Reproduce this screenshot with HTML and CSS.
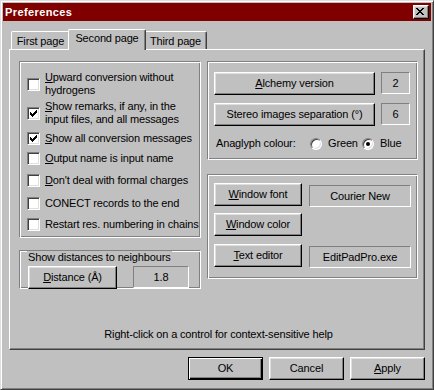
FILE: index.html
```html
<!DOCTYPE html>
<html>
<head>
<meta charset="utf-8">
<title>Preferences</title>
<link rel="stylesheet" href="styles.css">
</head>
<body>
<div class="window">
  <div class="titlebar">
    <span class="title">Preferences</span>
    <div class="closebtn">
      <svg width="8" height="7" viewBox="0 0 8 7" shape-rendering="crispEdges">
        <g fill="#000">
          <rect x="0" y="0" width="2" height="1"/><rect x="6" y="0" width="2" height="1"/>
          <rect x="1" y="1" width="2" height="1"/><rect x="5" y="1" width="2" height="1"/>
          <rect x="2" y="2" width="4" height="1"/>
          <rect x="3" y="3" width="2" height="1"/>
          <rect x="2" y="4" width="4" height="1"/>
          <rect x="1" y="5" width="2" height="1"/><rect x="5" y="5" width="2" height="1"/>
          <rect x="0" y="6" width="2" height="1"/><rect x="6" y="6" width="2" height="1"/>
        </g>
      </svg>
    </div>
  </div>
  <div class="content">
    <div class="tabs">
      <div class="tab tab-first">First page</div>
      <div class="tab tab-selected">Second page</div>
      <div class="tab tab-third">Third page</div>
    </div>
    <div class="panel">
      <div class="columns">
        <div class="leftcol">
          <div class="group group-checks">
            <div class="check c1"><span class="box"></span><span class="label"><u>U</u>pward conversion without<br>hydrogens</span></div>
            <div class="check c2"><span class="box checked"><svg width="7" height="7" viewBox="0 0 7 7" shape-rendering="crispEdges"><g fill="#000"><rect x="6" y="0" width="1" height="1"/><rect x="5" y="1" width="2" height="1"/><rect x="0" y="2" width="1" height="1"/><rect x="4" y="2" width="3" height="1"/><rect x="0" y="3" width="2" height="1"/><rect x="3" y="3" width="3" height="1"/><rect x="0" y="4" width="5" height="1"/><rect x="1" y="5" width="3" height="1"/><rect x="2" y="6" width="1" height="1"/></g></svg></span><span class="label"><u>S</u>how remarks, if any, in the<br>input files, and all messages</span></div>
            <div class="check c3"><span class="box checked"><svg width="7" height="7" viewBox="0 0 7 7" shape-rendering="crispEdges"><g fill="#000"><rect x="6" y="0" width="1" height="1"/><rect x="5" y="1" width="2" height="1"/><rect x="0" y="2" width="1" height="1"/><rect x="4" y="2" width="3" height="1"/><rect x="0" y="3" width="2" height="1"/><rect x="3" y="3" width="3" height="1"/><rect x="0" y="4" width="5" height="1"/><rect x="1" y="5" width="3" height="1"/><rect x="2" y="6" width="1" height="1"/></g></svg></span><span class="label"><u>S</u>how all conversion messages</span></div>
            <div class="check c4"><span class="box"></span><span class="label"><u>O</u>utput name is input name</span></div>
            <div class="check c5"><span class="box"></span><span class="label"><u>D</u>on't deal with formal charges</span></div>
            <div class="check c6"><span class="box"></span><span class="label">CONECT records to the end</span></div>
            <div class="check c7"><span class="box"></span><span class="label">Restart res. numbering in chains</span></div>
          </div>
          <div class="group group-dist">
            <div class="legend">Show distances to neighbours</div>
            <div class="dist-row">
              <div class="btn btn-dist"><span><u>D</u>istance (Å)</span></div>
              <div class="field field-dist">1.8</div>
            </div>
          </div>
        </div>
        <div class="rightcol">
          <div class="group group-alch">
            <div class="alch-row">
              <div class="btn btn-alch"><span><u>A</u>lchemy version</span></div>
              <div class="field field-num">2</div>
            </div>
            <div class="alch-row row-stereo">
              <div class="btn btn-alch"><span>Stereo images separation (°)</span></div>
              <div class="field field-num">6</div>
            </div>
            <div class="anaglyph">
              <span class="ana-label">Anaglyph colour:</span>
              <span class="radio"></span><span class="radio-label">Green</span>
              <span class="radio on"></span><span class="radio-label">Blue</span>
            </div>
          </div>
          <div class="group group-win">
            <div class="btn btn-win"><span><u>W</u>indow font</span></div>
            <div class="field field-win">Courier New</div>
            <div class="btn btn-win row2"><span><u>W</u>indow color</span></div>
            <div class="btn btn-win row3"><span><u>T</u>ext editor</span></div>
            <div class="field field-win row3">EditPadPro.exe</div>
          </div>
        </div>
      </div>
      <div class="hint">Right-click on a control for context-sensitive help</div>
    </div>
    <div class="buttons">
      <div class="btn btn-dlg btn-default"><span>OK</span></div>
      <div class="btn btn-dlg"><span>Cancel</span></div>
      <div class="btn btn-dlg"><span><u>A</u>pply</span></div>
    </div>
  </div>
</div>
</body>
</html>
```

FILE: styles.css
```css
html, body {
  margin: 0;
  padding: 0;
  background: #c0c0c0;
}
body {
  width: 434px;
  height: 390px;
  overflow: hidden;
  font-family: "Liberation Sans", Arial, sans-serif;
  font-size: 11px;
  line-height: 13px;
  letter-spacing: -0.15px;
  color: #000;
}
u { text-decoration: underline; text-underline-offset: 1px; }

.window {
  box-sizing: border-box;
  width: 434px;
  height: 390px;
  border: 1px solid;
  border-color: #dfdfdf #404040 #404040 #dfdfdf;
  box-shadow: inset 1px 1px #fff, inset -1px -1px #808080;
  padding: 2px;
  display: flex;
  flex-direction: column;
  background: #c0c0c0;
}

.titlebar {
  height: 18px;
  background: #800000;
  display: flex;
  align-items: center;
  padding: 0 2px;
}
.title {
  flex: 1;
  color: #fff;
  font-weight: bold;
  letter-spacing: 0.4px;
}
.closebtn {
  box-sizing: border-box;
  width: 16px;
  height: 14px;
  background: #c0c0c0;
  border: 1px solid;
  border-color: #fff #000 #000 #fff;
  box-shadow: inset -1px -1px #808080, inset 1px 1px #dfdfdf;
  padding: 2px 0 0 2px;
  display: flex;
  align-items: flex-start;
}
.closebtn svg { display: block; }

.content {
  flex: 1;
  display: flex;
  flex-direction: column;
  padding: 8px 6px 7px 6px;
}

.tabs {
  height: 20px;
  display: flex;
  align-items: flex-end;
  padding-left: 2px;
}
.tab {
  box-sizing: border-box;
  height: 18px;
  padding-top: 3px;
  text-align: center;
  background: #c0c0c0;
  border-top: 1px solid #fff;
  border-left: 1px solid #fff;
  border-right: 1px solid #404040;
  box-shadow: inset -1px 0 #808080;
  border-radius: 2px 2px 0 0;
}
.tab-first { width: 59px; }
.tab-third { width: 63px; }
.tab-selected {
  position: relative;
  z-index: 1;
  width: 78px;
  height: 21px;
  padding-top: 2px;
  margin: 0 -2px -1px -2px;
}

.panel {
  flex: 1;
  box-sizing: border-box;
  border: 1px solid;
  border-color: #fff #404040 #404040 #fff;
  box-shadow: inset -1px -1px #808080;
  padding: 11px 6px 8px 9px;
  display: flex;
  flex-direction: column;
}

.columns {
  display: flex;
  gap: 6px;
  align-items: flex-start;
}
.leftcol {
  width: 182px;
  display: flex;
  flex-direction: column;
}
.rightcol {
  width: 211px;
  display: flex;
  flex-direction: column;
}

.group {
  box-sizing: border-box;
  border: 1px solid;
  border-color: #808080 #fff #fff #808080;
  box-shadow: inset 1px 1px #fff, inset -1px -1px #808080;
}

/* checks group */
.group-checks {
  height: 177px;
  padding: 9px 0 0 7px;
  display: flex;
  flex-direction: column;
}
.check {
  display: flex;
  align-items: center;
  white-space: nowrap;
}
.c2 { margin-top: 3px; }
.c3 { margin-top: 6px; }
.c4 { margin-top: 7px; }
.c5 { margin-top: 9px; }
.c6 { margin-top: 10px; }
.c7 { margin-top: 8px; }
.box {
  box-sizing: border-box;
  flex: none;
  width: 13px;
  height: 13px;
  background: #fff;
  border: 1px solid;
  border-color: #808080 #fff #fff #808080;
  box-shadow: inset 1px 1px #404040, inset -1px -1px #dfdfdf;
  padding: 2px 0 0 2px;
  margin-right: 5px;
}
.box svg { display: block; }

/* distance group */
.group-dist {
  margin-top: 12px;
  height: 39px;
  padding: 0 0 0 8px;
}
.legend {
  display: inline-block;
  margin: -7px 0 0 -1px;
  padding: 0 1px;
  background: #c0c0c0;
  position: relative;
}
.dist-row {
  display: flex;
  margin-top: 2px;
  align-items: flex-start;
}

/* buttons */
.btn {
  box-sizing: border-box;
  height: 23px;
  background: #c0c0c0;
  border: 1px solid;
  border-color: #fff #000 #000 #fff;
  box-shadow: inset -1px -1px #808080, inset 1px 1px #dfdfdf;
  display: flex;
  align-items: center;
  justify-content: center;
  white-space: nowrap;
  padding-bottom: 1px;
}
.btn-dist { width: 89px; }
.field {
  box-sizing: border-box;
  height: 22px;
  border: 1px solid;
  border-color: #808080 #fff #fff #808080;
  display: flex;
  align-items: center;
  justify-content: center;
  white-space: nowrap;
}
.field-dist { width: 56px; margin-left: 16px; }

/* alchemy group */
.group-alch {
  height: 99px;
  padding: 10px 0 0 6px;
}
.alch-row {
  display: flex;
  align-items: flex-start;
}
.row-stereo { margin-top: 8px; }
.btn-alch { width: 161px; }
.field-num { width: 29px; margin-left: 6px; }
.anaglyph {
  display: flex;
  align-items: center;
  margin-top: 11px;
  padding-left: 2px;
  height: 13px;
}
.ana-label { width: 94px; }
.radio {
  box-sizing: border-box;
  flex: none;
  width: 12px;
  height: 12px;
  border-radius: 50%;
  background: #fff;
  border: 1px solid;
  border-color: #808080 #fff #fff #808080;
  box-shadow: inset 1px 1px #404040, inset -1px -1px #dfdfdf;
  display: flex;
  align-items: center;
  justify-content: center;
  margin-right: 6px;
}
.radio.on::after {
  content: "";
  width: 4px;
  height: 4px;
  border-radius: 50%;
  background: #000;
}
.radio-label { width: 34px; }

/* window group */
.group-win {
  margin-top: 14px;
  height: 105px;
  padding: 8px 0 0 6px;
  display: grid;
  grid-template-columns: 88px 102px;
  grid-template-rows: 23px 23px 23px;
  column-gap: 7px;
  row-gap: 7px;
  align-content: start;
  align-items: start;
}
.btn-win { width: 88px; grid-column: 1; }
.field-win { grid-column: 2; width: 102px; margin-top: 2px; }
.btn-win.row2 { grid-row: 2; }
.row3 { grid-row: 3; }
.btn-win.row3 { margin-top: 1px; }
.field-win.row3 { margin-top: 3px; }

.hint {
  margin-top: auto;
  text-align: center;
}

.buttons {
  display: flex;
  justify-content: flex-end;
  gap: 6px;
  margin-top: 7px;
}
.btn-dlg { width: 75px; }
.btn-default {
  border-color: #000;
  box-shadow: inset 1px 1px #fff, inset -1px -1px #000, inset -2px -2px #808080;
}
```
